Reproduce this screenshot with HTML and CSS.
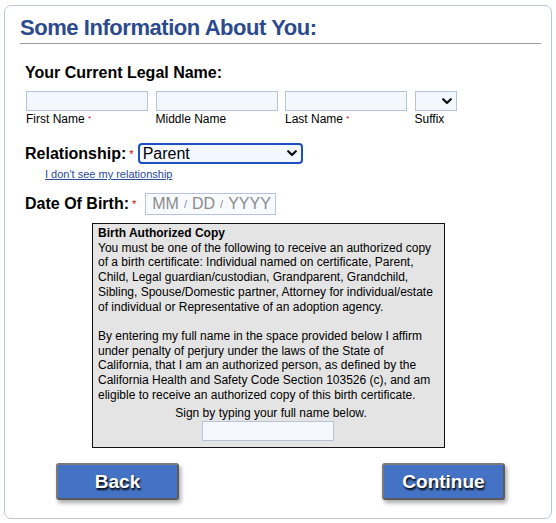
FILE: index.html
```html
<!DOCTYPE html>
<html>
<head>
<meta charset="utf-8">
<link rel="stylesheet" href="styles.css">
</head>
<body>
<div class="card">
  <h1 class="title">Some Information About You:</h1>

  <div class="section-label">Your Current Legal Name:</div>
  <div class="name-grid">
    <div class="field"><input class="txt" type="text"><span class="sub">First Name <span class="req">*</span></span></div>
    <div class="field"><input class="txt" type="text"><span class="sub">Middle Name</span></div>
    <div class="field"><input class="txt" type="text"><span class="sub">Last Name <span class="req">*</span></span></div>
    <div class="field">
      <div class="sel sel-suffix"><svg class="chev" width="10" height="7" viewBox="0 0 10 7"><path d="M1.2 1.2 L5 5 L8.8 1.2" fill="none" stroke="#111" stroke-width="2.2" stroke-linecap="round" stroke-linejoin="round"/></svg></div>
      <span class="sub">Suffix</span>
    </div>
  </div>

  <div class="row rel-row">
    <span class="row-label">Relationship:</span><span class="req big">*</span>
    <div class="sel sel-rel"><span>Parent</span><svg class="chev" width="10" height="7" viewBox="0 0 10 7"><path d="M1.2 1.2 L5 5 L8.8 1.2" fill="none" stroke="#111" stroke-width="2.2" stroke-linecap="round" stroke-linejoin="round"/></svg></div>
  </div>
  <a class="link" href="#">I don't see my relationship</a>

  <div class="row dob-row">
    <span class="row-label">Date Of Birth:</span><span class="req big">*</span>
    <div class="dob"><span>MM</span><span class="slash">/</span><span>DD</span><span class="slash">/</span><span>YYYY</span></div>
  </div>

  <div class="notice">
    <p class="n-title">Birth Authorized Copy</p>
    <p>You must be one of the following to receive an authorized copy<br>of a birth certificate: Individual named on certificate, Parent,<br>Child, Legal guardian/custodian, Grandparent, Grandchild,<br>Sibling, Spouse/Domestic partner, Attorney for individual/estate<br>of individual or Representative of an adoption agency.</p>
    <p class="gap">By entering my full name in the space provided below I affirm<br>under penalty of perjury under the laws of the State of<br>California, that I am an authorized person, as defined by the<br>California Health and Safety Code Section 103526 (c), and am<br>eligible to receive an authorized copy of this birth certificate.</p>
    <p class="sign">Sign by typing your full name below.</p>
    <input class="txt sign-input" type="text">
  </div>

  <div class="buttons">
    <button class="btn">Back</button>
    <button class="btn">Continue</button>
  </div>
</div>
</body>
</html>
```

FILE: styles.css
```css
html, body {
  margin: 0;
  padding: 0;
  background: #fff;
}
body {
  font-family: "Liberation Sans", Arial, sans-serif;
  color: #000;
  width: 556px;
  height: 523px;
  overflow: hidden;
}
.card {
  margin: 5px 4px 0 4px;
  height: 514px;
  box-sizing: border-box;
  border: 1px solid #bcc6d9;
  border-radius: 7px;
  padding: 9px 0 0 0;
}
.title {
  margin: 0 10px 0 15px;
  font-size: 22px;
  letter-spacing: -0.45px;
  line-height: 26px;
  font-weight: bold;
  color: #2c4a8e;
  padding-bottom: 2px;
  border-bottom: 1px solid #9c9c9c;
}
.section-label {
  margin: 19px 0 0 20px;
  font-size: 16px;
  line-height: 20px;
  font-weight: bold;
}
.name-grid {
  margin: 8px 0 0 21px;
  display: grid;
  grid-template-columns: 122px 122px 122px 42px;
  column-gap: 7.5px;
}
.field {
  display: flex;
  flex-direction: column;
}
.txt {
  display: block;
  box-sizing: border-box;
  height: 20px;
  margin: 0;
  padding: 0;
  border: 1px solid #b7c3da;
  background: #f3f7ff;
  border-radius: 0;
  outline: none;
}
.sub {
  margin-top: 1px;
  font-size: 12px;
  line-height: 14px;
}
.req {
  color: #d40000;
  font-size: 8px;
  vertical-align: 2px;
}
.req.big {
  font-size: 11px;
  vertical-align: 0;
  margin-left: 3px;
}
.sel {
  box-sizing: border-box;
  display: flex;
  align-items: center;
  justify-content: space-between;
  background: #f3f7ff;
}
.sel-suffix {
  height: 20px;
  border: 1px solid #b7c3da;
  justify-content: flex-end;
  padding-right: 4px;
}
.row {
  display: flex;
  align-items: center;
  margin-left: 20px;
}
.row-label {
  font-size: 16px;
  line-height: 20px;
  font-weight: bold;
}
.rel-row {
  margin-top: 17px;
}
.sel-rel {
  margin-left: 4px;
  width: 165px;
  height: 21px;
  border: 2px solid #1b4fc4;
  border-radius: 4px;
  padding: 0 4px 0 3px;
  font-size: 16px;
}
.link {
  display: inline-block;
  margin: 3px 0 0 40px;
  font-size: 11px;
  line-height: 14px;
  color: #2a4c9b;
  text-decoration: underline;
}
.dob-row {
  margin-top: 11px;
}
.dob {
  box-sizing: border-box;
  margin-left: 9px;
  width: 131px;
  height: 22px;
  border: 1px solid #b7c3da;
  background: #f8faff;
  color: #8c8c8c;
  font-size: 16px;
  display: flex;
  align-items: center;
  padding-left: 6px;
  gap: 0;
}
.dob .slash {
  font-size: 11px;
  margin: 0 5px;
}
.notice {
  box-sizing: border-box;
  margin: 8px 0 0 87px;
  width: 353px;
  height: 225px;
  border: 1px solid #111;
  background: #e4e4e4;
  padding: 2px 0 0 5px;
  font-size: 12px;
  line-height: 14.7px;
  white-space: nowrap;
}
.notice p {
  margin: 0;
}
.n-title {
  font-weight: bold;
}
.notice .gap {
  margin-top: 14.7px;
}
.notice .sign {
  margin-top: 4px;
  text-align: center;
}
.sign-input {
  margin: 0 0 0 104px;
  width: 132px;
  background: #f5f8ff;
}
.buttons {
  margin: 15px 0 0 51px;
  width: 449px;
  display: flex;
  justify-content: space-between;
}
.btn {
  box-sizing: border-box;
  width: 123px;
  height: 37px;
  background: #4472c4;
  border: 2px solid #5a5a5a;
  border-top-color: #7a7a7a;
  border-left-color: #7a7a7a;
  border-radius: 3px;
  box-shadow: 2px 3px 4px rgba(0,0,0,0.35);
  color: #fff;
  font-family: "Liberation Sans", Arial, sans-serif;
  font-weight: bold;
  font-size: 19px;
  text-shadow: 1px 2px 2px #000;
  padding: 0;
}
```
